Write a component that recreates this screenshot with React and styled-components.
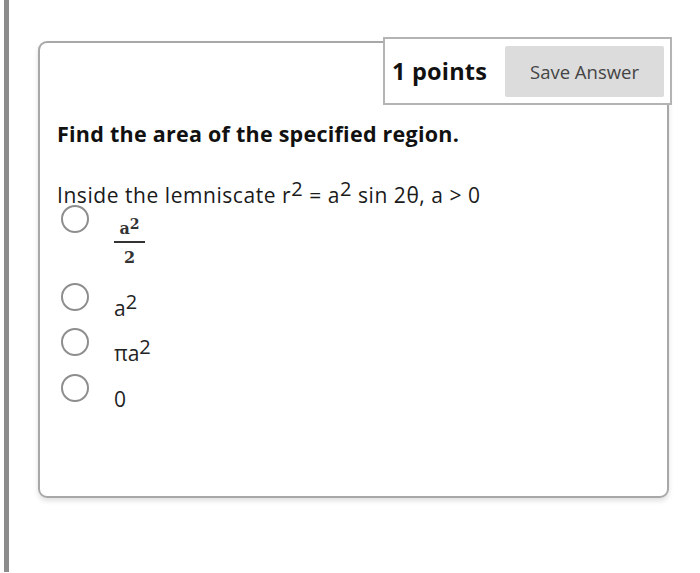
import React from "react";
import styled, { createGlobalStyle } from "styled-components";

const Global = createGlobalStyle`
  html, body { margin: 0; padding: 0; background: #fff; }
  body { font-family: "Open Sans", "Liberation Sans", sans-serif; color: #1a1a1a; }
`;

const Page = styled.div`
  width: 700px;
  height: 573px;
  display: flex;
  align-items: flex-start;
  overflow: hidden;
`;

const SideBar = styled.div`
  width: 5px;
  height: 572px;
  margin-left: 4px;
  background: #8c8c8c;
  flex: none;
`;

const Card = styled.div`
  position: relative;
  margin-left: 29px;
  margin-top: 41px;
  width: 631px;
  height: 457px;
  box-sizing: border-box;
  border: 2px solid #a8a8a8;
  border-radius: 9px;
  box-shadow: 0 3px 5px rgba(0, 0, 0, 0.12);
  padding: 77px 0 0 17px;
  flex: none;
`;

const Header = styled.div`
  position: absolute;
  top: -6px;
  right: -5px;
  width: 289px;
  height: 68px;
  box-sizing: border-box;
  border: 2px solid #b4b4b4;
  background: #fff;
  display: flex;
  align-items: center;
  justify-content: space-between;
  padding: 0 6px 0 7px;
`;

const Points = styled.span`
  font-weight: 700;
  font-size: 23.5px;
  letter-spacing: 0.2px;
  color: #111;
`;

const SaveButton = styled.button`
  width: 159px;
  height: 51px;
  border: none;
  border-radius: 2px;
  background: #dcdcdc;
  color: #444;
  font-family: "Open Sans", sans-serif;
  font-size: 18.5px;
  padding: 0;
`;

const Title = styled.div`
  font-weight: 700;
  font-size: 21.5px;
  letter-spacing: 0.25px;
  color: #111;
  line-height: 28px;
`;

const Prompt = styled.div`
  margin-top: 34px;
  font-size: 21px;
  letter-spacing: 0.55px;
  color: #1a1a1a;
  line-height: 26px;
  white-space: nowrap;
  sup { font-size: 20px; vertical-align: 7px; line-height: 0; }
`;

const Options = styled.div`
  display: flex;
  flex-direction: column;
  margin-top: -4px;
`;

const Option = styled.label`
  display: flex;
  align-items: flex-start;
  height: ${(p) => p.h}px;
  flex: none;
`;

const Radio = styled.span`
  width: 28px;
  height: 28px;
  box-sizing: border-box;
  border: 2.5px solid #8e8e8e;
  border-radius: 50%;
  margin-left: 4px;
  margin-top: ${(p) => p.top || 0}px;
  flex: none;
`;

const OptText = styled.span`
  margin-left: 25px;
  margin-top: 13px;
  font-size: 21px;
  color: #222;
  line-height: 24px;
  white-space: nowrap;
  sup { font-size: 20px; vertical-align: 7px; line-height: 0; }
`;

const Frac = styled.span`
  margin-left: 25px;
  margin-top: 16px;
  display: inline-flex;
  flex-direction: column;
  align-items: center;
  font-family: "DejaVu Serif", "Liberation Serif", serif;
  font-size: 16px;
  font-weight: 700;
  color: #333;
  line-height: 18px;
  sup { font-size: 14px; vertical-align: 5px; line-height: 0; }
`;

const FracTop = styled.span`
  width: 31px;
  text-align: center;
  padding-bottom: 3px;
  border-bottom: 2px solid #333;
`;

const FracBottom = styled.span`
  padding-top: 6px;
`;

export default function App() {
  return (
    <>
      <Global />
      <Page>
        <SideBar />
        <Card>
          <Header>
            <Points>1 points</Points>
            <SaveButton>Save Answer</SaveButton>
          </Header>
          <Title>Find the area of the specified region.</Title>
          <Prompt>
            Inside the lemniscate r<sup>2</sup> = a<sup>2</sup> sin 2θ, a &gt; 0
          </Prompt>
          <Options>
            <Option h={79}>
              <Radio top={1} />
              <Frac>
                <FracTop>a<sup>2</sup></FracTop>
                <FracBottom>2</FracBottom>
              </Frac>
            </Option>
            <Option h={45}>
              <Radio />
              <OptText>a<sup>2</sup></OptText>
            </Option>
            <Option h={46}>
              <Radio />
              <OptText>πa<sup>2</sup></OptText>
            </Option>
            <Option h={46}>
              <Radio />
              <OptText>0</OptText>
            </Option>
          </Options>
        </Card>
      </Page>
    </>
  );
}
